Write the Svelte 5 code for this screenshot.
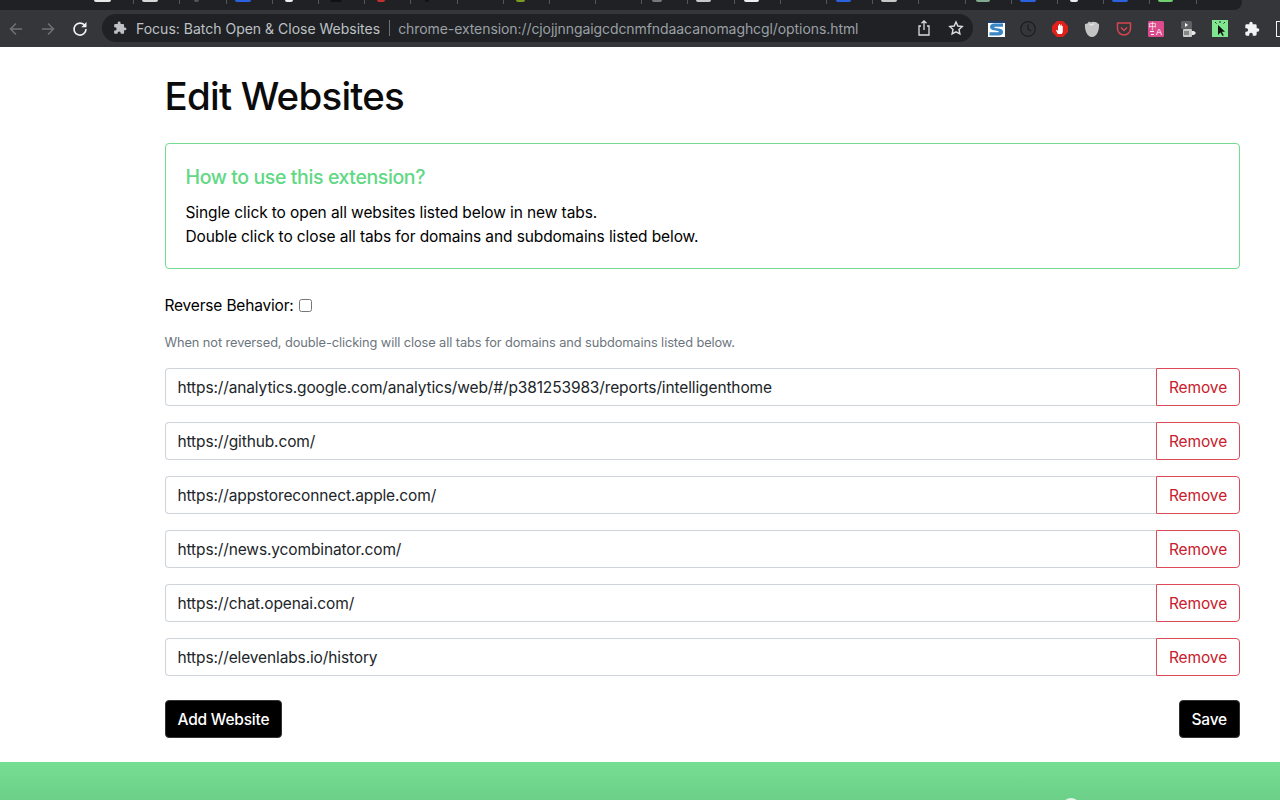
<script>
  const urls = [
    "https://analytics.google.com/analytics/web/#/p381253983/reports/intelligenthome",
    "https://github.com/",
    "https://appstoreconnect.apple.com/",
    "https://news.ycombinator.com/",
    "https://chat.openai.com/",
    "https://elevenlabs.io/history"
  ];
  // the bit of each tab's favicon that peeks out at the very top of the window
  const tabs = [
    { color: "#e8e8e8", left: 6, width: 17 },
    { color: "#d8d8d8", left: 8, width: 16 },
    { color: "#55565a", left: 14, width: 5 },
    { color: "#2a62e0", left: 8, width: 16 },
    { color: "#eeeeee", left: 12, width: 8 },
    { color: "#111111", left: 11, width: 12 },
    { color: "#c62f2f", left: 12, width: 8 },
    { color: "#111111", left: 14, width: 4 },
    null,
    { color: "#7a9a20", left: 12, width: 9 },
    null,
    null,
    { color: "#77787c", left: 10, width: 10 },
    { color: "#c8c8c8", left: 8, width: 15 },
    { color: "#eeeeee", left: 9, width: 15 },
    null,
    { color: "#2a62e0", left: 9, width: 15 },
    { color: "#c8c8c8", left: 8, width: 16 },
    null,
    { color: "#7faa90", left: 10, width: 14 },
    { color: "#2a62e0", left: 8, width: 16 },
    { color: "#eeeeee", left: 12, width: 8 },
    { color: "#2a62e0", left: 8, width: 16 },
    { color: "#70d070", left: 8, width: 15 }
  ];
</script>

<div class="browser">
  <div class="tabstrip">
    {#each tabs as tab}
      <div class="tab">
        {#if tab}<span class="fav" style={`background:${tab.color};margin-left:${tab.left}px;width:${tab.width}px`}></span>{/if}
      </div>
    {/each}
  </div>
  <div class="toolbar">
    <svg class="nav" width="16" height="16" viewBox="0 0 16 16" fill="none" stroke="#6f7175" stroke-width="1.5"><path d="M14 8H2.5M8 2.5 2.5 8 8 13.5"/></svg>
    <svg class="nav forward" width="16" height="16" viewBox="0 0 16 16" fill="none" stroke="#6f7175" stroke-width="1.5"><path d="M2 8h11.500M8 2.500 13.500 8 8 13.500"/></svg>
    <svg class="nav reload" width="16" height="16" viewBox="0 0 16 16" fill="none" stroke="#f1f3f4" stroke-width="1.6"><path d="M13 4.800A6 6 0 1 0 14 8"/><path d="M14.500 1v5.200H9.300" fill="#f1f3f4" stroke="none"/></svg>
    <div class="omnibox">
      <svg width="14" height="14" viewBox="0 0 24 24" fill="#bdc1c6"><path d="M20.500 11H19V7a2 2 0 0 0-2-2h-4V3.500a2.500 2.500 0 0 0-5 0V5H4a2 2 0 0 0-2 2v3.800h1.500a2.700 2.700 0 0 1 0 5.400H2V20a2 2 0 0 0 2 2h3.800v-1.500a2.700 2.700 0 0 1 5.400 0V22H17a2 2 0 0 0 2-2v-4h1.500a2.500 2.500 0 0 0 0-5z"/></svg>
      <span class="page-title">Focus: Batch Open &amp; Close Websites</span>
      <span class="sep"></span>
      <span class="page-url">chrome-extension://cjojjnngaigcdcnmfndaacanomaghcgl/options.html</span>
      <span class="spacer"></span>
      <svg class="share" width="16" height="18" viewBox="0 0 16 18" fill="none" stroke="#dadce0" stroke-width="1.3"><path d="M5 7H3v9h10V7h-2M8 11V2M5.500 4.300 8 1.800l2.500 2.500"/></svg>
      <svg class="star" width="16" height="16" viewBox="0 0 24 24" fill="none" stroke="#dadce0" stroke-width="2.2"><path d="m12 3 2.800 6 6.500.8-4.800 4.500 1.300 6.500L12 17.600 6.200 20.800l1.300-6.500L2.700 9.800 9.200 9z"/></svg>
    </div>
    <div class="extensions">
      <svg width="17" height="16" viewBox="0 0 17 16"><rect width="17" height="16" fill="#fff"/><rect width="17" height="2" fill="#1d3f72"/><path d="M15 2.500H6.500C3.500 2.500 2 4 2 6s2 3 4 3.300l4 .6c1 .2 1 1.400 0 1.400H1.500V14.500h9c3 0 4.500-1.500 4.500-3.500s-1.500-3-4-3.400L7 7C6 6.800 6 5.700 7 5.700h8z" fill="#3b86c4"/></svg>
      <svg width="16" height="16" viewBox="0 0 16 16" fill="none" stroke="#1c1d20" stroke-width="1.2"><circle cx="8" cy="8" r="7.300"/><path d="M8 3.500V8l3 2"/></svg>
      <svg width="16" height="16" viewBox="0 0 16 16"><path d="M5 0h6l5 5v6l-5 5H5l-5-5V5z" fill="#e0201b"/><path d="M5.800 13 4 9.200l1-.5 1 1.300V4.500h1V3h.9v1.500h.9V3.600h1v1.400h1v6l-1 2z" fill="#fff"/></svg>
      <svg width="16" height="16" viewBox="0 0 16 16"><path d="M1 3c2 0 3-1 3.500-2s2.500 1 3.500 0 3 .5 3.500 0S14 3 15 3c.5 6-2 13-7 13S.5 9 1 3z" fill="#c4c4c4"/><path d="M4.500 2.500c2 1 4 .5 6-.5-.5 3-4 4-6 .5z" fill="#e2e2e2"/></svg>
      <svg width="16" height="16" viewBox="0 0 16 16" fill="none" stroke="#d9434f" stroke-width="1.5"><path d="M1.500 2h13v5.500a6.500 6.500 0 0 1-13 0z" stroke-linejoin="round"/><path d="M5 6.500 8 9.500l3-3"/></svg>
      <svg width="16" height="16" viewBox="0 0 16 16"><rect width="16" height="16" rx="1.5" fill="#dd4b8f"/><text x="0.500" y="8" font-size="8" fill="#fff" font-family="Noto Sans CJK SC, sans-serif">中</text><text x="8" y="14" font-size="9" fill="#fff" font-family="Liberation Sans, sans-serif">A</text><path d="M2 10.500h4M3 13.500h3" stroke="#fff" fill="none"/></svg>
      <svg width="16" height="16" viewBox="0 0 16 16"><rect x="1" y="0" width="11" height="8" rx="1.500" fill="#5f6165"/><path d="m5 2 3 2-3 2z" fill="#fff"/><rect x="3" y="8" width="9" height="8" rx="1" fill="#c9c9c9"/><path d="M4 11h5M4 13h5" stroke="#444" fill="none"/><path d="M12 10h2l2 2-2 2h-2z" fill="#e8e8e8"/></svg>
      <svg width="16" height="17" viewBox="0 0 16 17"><rect width="16" height="17" fill="#7fe58f"/><path d="M6 5v10l2.500-2.500 2 3.500 1.300-.8-2-3.400H13z" fill="#111"/><path d="M3 2l1.500 1.500M8 1v2M13 2l-1.500 1.500" stroke="#222" fill="none"/></svg>
      <svg width="16" height="16" viewBox="0 0 24 24" fill="#f1f3f4"><path d="M20.500 11H19V7a2 2 0 0 0-2-2h-4V3.500a2.500 2.500 0 0 0-5 0V5H4a2 2 0 0 0-2 2v3.800h1.500a2.700 2.700 0 0 1 0 5.400H2V20a2 2 0 0 0 2 2h3.800v-1.500a2.700 2.700 0 0 1 5.400 0V22H17a2 2 0 0 0 2-2v-4h1.500a2.500 2.500 0 0 0 0-5z"/></svg>
      <span class="profile"></span>
    </div>
  </div>
</div>

<main class="page">
  <h1>Edit Websites</h1>

  <section class="howto">
    <h2>How to use this extension?</h2>
    <p>Single click to open all websites listed below in new tabs.</p>
    <p>Double click to close all tabs for domains and subdomains listed below.</p>
  </section>

  <label class="reverse">Reverse Behavior: <input type="checkbox" /></label>
  <p class="hint">When not reversed, double-clicking will close all tabs for domains and subdomains listed below.</p>

  <div class="list">
    {#each urls as url}
      <div class="row">
        <input type="text" value={url} />
        <button class="remove">Remove</button>
      </div>
    {/each}
  </div>

  <div class="actions">
    <button class="dark">Add Website</button>
    <button class="dark">Save</button>
  </div>
</main>

<footer class="footer"><span class="arc"></span></footer>

<style>
  :global(body) {
    margin: 0;
    background: #fff;
    height: 800px;
    overflow: hidden;
    font-family: Inter, "Liberation Sans", sans-serif;
    color: #000;
  }

  .browser {
    height: 47px;
    background: #35363a;
    overflow: hidden;
  }

  .tabstrip {
    height: 10px;
    width: 1242px;
    display: flex;
    background: #202124;
    border-bottom-right-radius: 8px;
    padding-left: 88px;
    box-sizing: border-box;
  }

  .tab {
    width: 46.2px;
    height: 4px;
    flex: none;
    box-sizing: border-box;
    border-right: 1px solid #55565a;
    display: flex;
  }

  .fav {
    height: 2px;
    border-radius: 0 0 2px 2px;
  }

  .toolbar {
    height: 37px;
    display: flex;
    align-items: center;
    padding-left: 8px;
  }

  .nav {
    flex: none;
    margin-right: 16px;
  }

  .nav.reload {
    margin-right: 14px;
  }

  .omnibox {
    width: 871px;
    height: 28px;
    margin-top: -1px;
    background: #202124;
    border-radius: 14px;
    display: flex;
    align-items: center;
    padding: 0 9px 0 11px;
    box-sizing: border-box;
    font-size: 14px;
    white-space: nowrap;
    flex: none;
  }

  .page-title {
    color: #bdc1c6;
    margin-left: 9px;
  }

  .sep {
    width: 1px;
    height: 16px;
    background: #6f7175;
    margin: 0 8px 0 9px;
  }

  .page-url {
    color: #9aa0a6;
    letter-spacing: -0.08px;
  }

  .spacer {
    flex: 1;
  }

  .star {
    margin-left: 16px;
  }

  .extensions {
    display: flex;
    align-items: center;
    gap: 16px;
    margin-left: 15px;
  }

  .extensions svg {
    flex: none;
  }

  .extensions svg:first-child {
    margin-right: -1px;
  }

  .profile {
    flex: none;
    width: 14px;
    height: 14px;
    border: 1px solid #f1f3f4;
  }

  .page {
    width: 1075.5px;
    margin-left: 164.5px;
    height: 715px;
    display: flex;
    flex-direction: column;
    font-size: 15.5px;
    letter-spacing: -0.13px;
  }

  h1 {
    margin: 25px 0 0;
    font-size: 38.5px;
    letter-spacing: -0.78px;
    line-height: 48px;
    font-weight: 500;
    color: #0b0b0b;
  }

  .howto {
    margin-top: 23px;
    height: 126px;
    box-sizing: border-box;
    border: 1px solid #74db90;
    border-radius: 4px;
    padding: 21px 20px 0;
  }

  .howto h2 {
    margin: 0 0 12px;
    font-size: 19.5px;
    letter-spacing: -0.39px;
    line-height: 24px;
    font-weight: 500;
    color: #60d884;
  }

  .howto p {
    margin: 0;
    line-height: 24px;
    letter-spacing: -0.1px;
  }

  .reverse {
    margin-top: 25px;
    line-height: 24px;
    letter-spacing: -0.18px;
    display: flex;
    align-items: center;
    gap: 5px;
  }

  .reverse input {
    margin: -2px 0 0;
    width: 13px;
    height: 13px;
  }

  .hint {
    margin: 15px 0 0;
    font-size: 12.8px;
    letter-spacing: -0.09px;
    line-height: 19px;
    color: #6c757d;
  }

  .list {
    margin-top: 16px;
    display: flex;
    flex-direction: column;
    gap: 16px;
  }

  .row {
    display: flex;
    height: 38px;
  }

  .row input {
    flex: 1;
    min-width: 0;
    box-sizing: border-box;
    border: 1px solid #ced4da;
    border-right: 0;
    border-radius: 4px 0 0 4px;
    padding: 6px 12px;
    font: inherit;
    letter-spacing: inherit;
    color: #212529;
    outline: none;
  }

  .remove {
    width: 84px;
    box-sizing: border-box;
    background: #fff;
    border: 1px solid #dd4a57;
    border-radius: 0 4px 4px 0;
    color: #c8202c;
    font: inherit;
    letter-spacing: -0.1px;
    padding: 0;
  }

  .actions {
    margin-top: 24px;
    display: flex;
    justify-content: space-between;
  }

  .dark {
    height: 38px;
    background: #000;
    border: 1px solid #333;
    border-radius: 4px;
    color: #fff;
    font: inherit;
    letter-spacing: -0.2px;
    font-weight: 500;
    padding: 0 12px;
  }

  .footer {
    position: relative;
    height: 38px;
    overflow: hidden;
    background: linear-gradient(#76de92, #6cd088);
  }

  .arc {
    position: absolute;
    left: 1062px;
    top: 36px;
    width: 18px;
    height: 18px;
    border-radius: 50%;
    background: #dff5e6;
  }
</style>
